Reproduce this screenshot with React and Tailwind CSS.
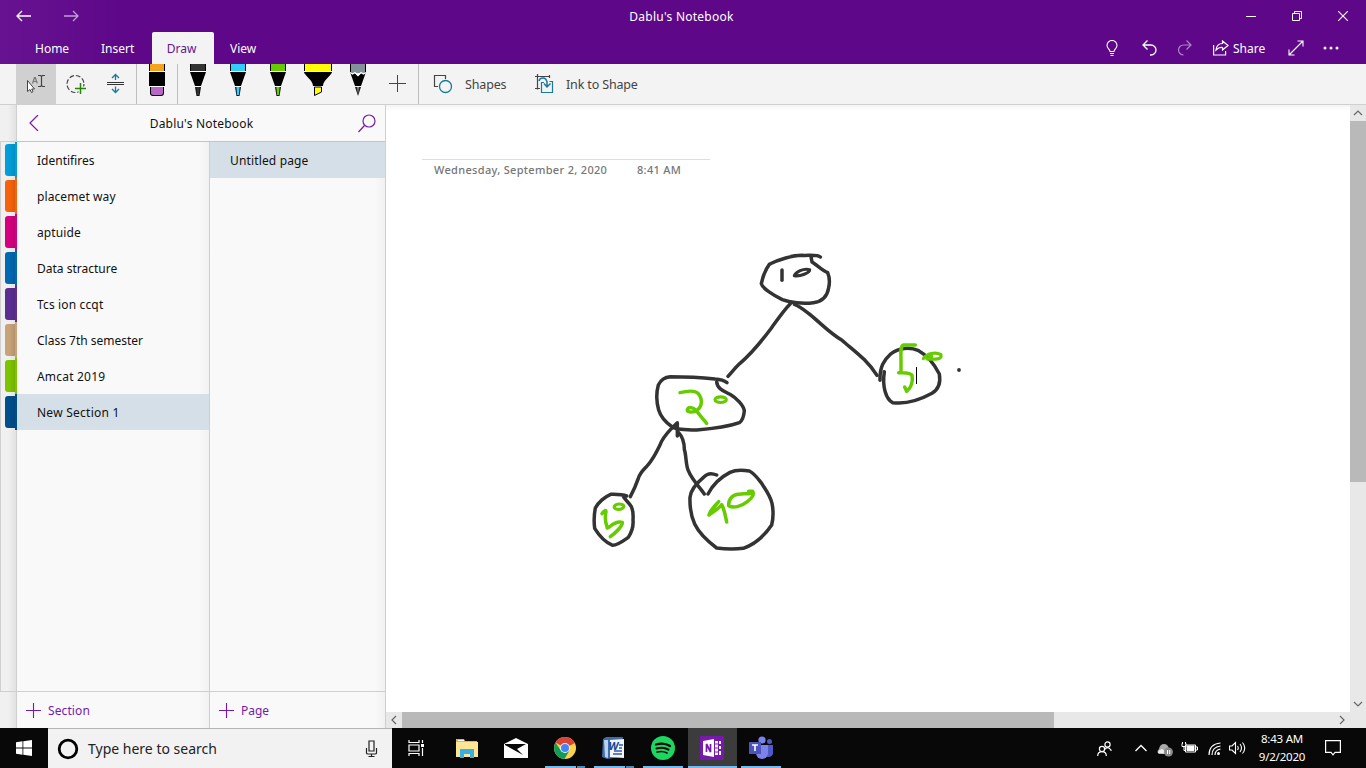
import React from "react";

const sections = [
  { name: "Identifires", color: "bg-[#009fda]" },
  { name: "placemet way", color: "bg-[#f7630c]", track: "tracking-[0.1px]" },
  { name: "aptuide", color: "bg-[#d4007f]", track: "tracking-[0.1px]" },
  { name: "Data stracture", color: "bg-[#0069b1]" },
  { name: "Tcs ion ccqt", color: "bg-[#5c2e91]", track: "tracking-[0.15px]" },
  { name: "Class 7th semester", color: "bg-[#c8a379]" },
  { name: "Amcat 2019", color: "bg-[#7dc400]", track: "tracking-[0.2px]" },
  { name: "New Section 1", color: "bg-[#004e8c]", active: true, track: "tracking-[0.25px]" },
];

const Icon = ({ w, h, sw = 1, className = "", children }) => (
  <svg width={w} height={h} viewBox={`0 0 ${w} ${h}`} fill="none" stroke="currentColor" strokeWidth={sw} className={`block shrink-0 ${className}`}>
    {children}
  </svg>
);

function TitleBar() {
  return (
    <header className="flex h-16 flex-col bg-[linear-gradient(90deg,#671391_0,#5e0889_120px)] text-white">
      <div className="flex h-8 items-center">
        <div className="flex w-[200px] items-center gap-8 pl-4">
          <Icon w={16} h={12} sw={1.3}><path d="M15 6H1M6 1L1 6l5 5" /></Icon>
          <Icon w={16} h={12} sw={1.3} className="opacity-60"><path d="M0 6h14M9 1l5 5-5 5" /></Icon>
        </div>
        <div className="flex-1 pr-[65px] pt-0.5 text-center text-[12px] tracking-[0.25px]">Dablu's Notebook</div>
        <div className="flex w-[138px]">
          <div className="flex h-8 w-[46px] items-center justify-center"><Icon w={10} h={10}><path d="M0 5.5h10" /></Icon></div>
          <div className="flex h-8 w-[46px] items-center justify-center"><Icon w={10} h={10}><path d="M.5 2.5h7v7h-7zM2.500 2.500v-2h7v7h-2" /></Icon></div>
          <div className="flex h-8 w-[46px] items-center justify-center"><Icon w={10} h={10} sw={1.1}><path d="M0 0l10 10M10 0L0 10" /></Icon></div>
        </div>
      </div>
      <nav className="flex h-8 items-center text-[12px]">
        <div className="w-[67px] pl-[35px] pt-0.5">Home</div>
        <div className="w-[85px] pl-[34px] pt-0.5">Insert</div>
        <div className="flex h-8 w-[62px] items-center justify-center rounded-t-[2px] bg-[#f3f3f3] pr-[3px] pt-0.5 text-[#671391]">Draw</div>
        <div className="flex-1 pl-4 pt-0.5">View</div>
        <div className="flex h-8 w-[260px] items-center">
          <Icon w={12} h={17} sw={1.1}><path d="M4 11.500C4 9 1 8.500 1 5.500a5 5 0 0 1 10 0C11 8.500 8 9 8 11.500zM4 13.500h4M4.500 15.500h3" /></Icon>
          <Icon w={15} h={16} sw={1.3} className="ml-6"><path d="M5.500.500L1 5l4.500 4.500M1 5h8a5 5 0 0 1 0 10H8" /></Icon>
          <Icon w={15} h={16} sw={1.2} className="ml-5 opacity-50"><path d="M9.500.500L14 5 9.500 9.500M14 5H6.500a5 5 0 0 0 0 10" /></Icon>
          <Icon w={16} h={16} sw={1.2} className="ml-[21px]"><path d="M.600 5v10h12v-4M9.500 1L15 5.500 9.500 10V7.500C6.500 7 5 8 3 10c.5-4 3-6.500 6.500-6.500z" /></Icon>
          <span className="ml-1 w-9 pt-0.5">Share</span>
          <Icon w={16} h={16} sw={1.1} className="ml-[19px]"><path d="M1 15L15 1M9.500 1H15v5.500M1 9.500V15h5.500" /></Icon>
          <svg width="16" height="4" viewBox="0 0 16 4" fill="currentColor" className="ml-[19px]"><circle cx="2" cy="2" r="1.500" /><circle cx="8" cy="2" r="1.500" /><circle cx="14" cy="2" r="1.500" /></svg>
        </div>
      </nav>
    </header>
  );
}

const Tool = ({ children, className = "" }) => (
  <div className={`flex h-10 w-10 shrink-0 items-start justify-center ${className}`}>{children}</div>
);

const Pen = ({ color }) => (
  <svg width="16" height="34" viewBox="0 0 16 34">
    <path d="M0 0h16v7H0z" fill="#000" /><path d="M1 0h14v7H1z" fill={color} />
    <path d="M0 7h16v1H0z" fill="#fff" />
    <path d="M0 8h16l-5 14H5z" fill="#000" />
    <path d="M5 22h6v1H5z" fill="#fff" />
    <path d="M5 23h6L9.500 32h-3z" fill="#111" /><path d="M6.300 23h3.400l-.8 8H7.100z" fill={color} />
  </svg>
);

function Toolbar() {
  return (
    <div className="flex h-[41px] border-b border-[#cfcfcf] bg-[#f3f3f3] pl-4 text-[#444]">
      <Tool className="bg-[#d0d0d0]">
        <svg width="40" height="40" viewBox="0 0 40 40" fill="none" stroke="#444">
          <path d="M22 11.500h2.500l1 1 1-1H29M25.500 12v10M22 22.500h2.500l1-1 1 1H29" strokeWidth="1.200" />
          <path d="M16.500 19.500l2-6h.8l2 6M17.500 17.500h3.500" stroke="#777" strokeWidth="1.200" />
          <path d="M11.500 16.500v11l2.500-2 1.500 3 1.500-.8-1.300-2.700h2.800z" fill="white" />
        </svg>
      </Tool>
      <Tool>
        <svg width="40" height="40" viewBox="0 0 40 40" fill="none">
          <circle cx="19.500" cy="20" r="8.500" stroke="#444" strokeWidth="1.200" strokeDasharray="4.700 2" />
          <path d="M19 24.500h11M24.500 19v11" stroke="#f3f3f3" strokeWidth="4" />
          <path d="M19 24.500h11M24.500 19v11" stroke="#268608" strokeWidth="1.500" />
        </svg>
      </Tool>
      <Tool>
        <svg width="40" height="40" viewBox="0 0 40 40" fill="none" stroke="#197a9b" strokeWidth="1.300">
          <path d="M19.500 10.500V16M16 14l3.500-3.500L23 14M19.500 22.500V28M16 25l3.500 3.500L23 25" />
          <path d="M11 18.500h17M11 20.500h17" stroke="#333" strokeWidth="1" />
        </svg>
      </Tool>
      <Tool className="w-[42px] border-x border-[#bdbdbd]">
        <svg width="16" height="34" viewBox="0 0 16 34">
          <path d="M0 7h16v1H0zM0 22h16v1H0z" fill="#fff" />
          <path d="M0 0h16v7H0z" /><path d="M1 0h14v7H1z" fill="#f5a31d" /><path d="M0 8h16v14H0z" />
          <path d="M1 23h14v6a3 3 0 0 1-3 3H4a3 3 0 0 1-3-3z" /><path d="M2 23h12v6a2 2 0 0 1-2 2H4a2 2 0 0 1-2-2z" fill="#ba66c8" />
        </svg>
      </Tool>
      <Tool><Pen color="#333" /></Tool>
      <Tool><Pen color="#33ccff" /></Tool>
      <Tool><Pen color="#66cc00" /></Tool>
      <Tool>
        <svg width="28" height="34" viewBox="0 0 28 34">
          <path d="M0 7h28v1H0zM9 22h10v1H9z" fill="#fff" />
          <path d="M0 0h28v7H0z" /><path d="M1 0h26v7H1z" fill="#ff0" />
          <path d="M0 8h28c0 3-9 8-9 14H9C9 16 0 11 0 8z" /><path d="M10.500 23h7v5l-7 3.500z" fill="#ff0" stroke="#000" />
        </svg>
      </Tool>
      <Tool>
        <svg width="16" height="34" viewBox="0 0 16 34">
          <path d="M0 0h16v9H0z" /><path d="M1 0h14v9H1z" fill="#84939a" />
          <path d="M0 8l2.500 2L5 9l3 3 3-3 2.500 1L16 8l-5 14H5z" /><path d="M0 8.500l2.500 1.500L5 8.500l3 3 3-3 2.500 1.500L16 8.500" fill="none" stroke="#fff" strokeWidth="1.300" />
          <path d="M5 23h6L8 32z" fill="#222" /><path d="M7 23h2l-1 7z" fill="#84939a" />
        </svg>
      </Tool>
      <Tool><svg width="40" height="40" viewBox="0 0 40 40" stroke="#444" strokeWidth="1"><path d="M11 19.500h17M19.500 11v17" /></svg></Tool>
      <div className="flex h-10 items-center border-l border-[#bdbdbd] pl-3.5 text-[12.5px] tracking-[-0.15px]">
        <svg width="20" height="20" viewBox="0 0 20 20" fill="none"><path d="M5 12.500H1.500v-11h11V5" stroke="#444" strokeWidth="1.200" /><circle cx="12.500" cy="12.500" r="6" stroke="#197a9b" strokeWidth="1.300" /></svg>
        <span className="ml-3 w-[70px] pt-0.5">Shapes</span>
        <svg width="20" height="20" viewBox="0 0 20 20" fill="none"><path d="M0 2.500h15M2.500 0v15.500M14.500 1v3M0 14.500h5" stroke="#444" strokeWidth="1.200" /><path d="M9 8.500H6.500v10h11v-11h-3" stroke="#197a9b" strokeWidth="1.200" /><path d="M4 7c1-4 7-4.500 8 1v5M9 9.500l3 3.500 3.500-3.500" stroke="#197a9b" strokeWidth="1.500" /></svg>
        <span className="ml-[11px] pt-0.5">Ink to Shape</span>
      </div>
    </div>
  );
}

const Plus = () => <Icon w={15} h={15} sw={1.1}><path d="M0 7.500h15M7.500 0v15" /></Icon>;

function Sidebar() {
  return (
    <aside className="flex w-[386px] shrink-0 text-[12px] text-[#111]">
      <div className="z-10 flex w-4 shrink-0 flex-col bg-[linear-gradient(90deg,#f0f0f0_50%,#e2e2e2)]">
        <div className="h-9" />
        <div className="h-[551px] border-y border-l border-[#cfcfcf]">
          {sections.map((s) => (
            <div key={s.name} className="flex h-9 w-4 items-center pl-1">
              <div className={`h-8 w-2.5 shrink-0 rounded-l-[3px] bg-[linear-gradient(90deg,transparent_40%,rgba(0,0,0,0.1))] ${s.color}`} />
              <div className={`h-9 w-0.5 shrink-0 ${s.color}`} />
            </div>
          ))}
        </div>
      </div>
      <div className="flex flex-1 flex-col border-r border-[#cfcfcf] border-l bg-[#f9f9f9]">
        <div className="flex h-[37px] items-center border-b border-[#c4c4c4] px-3 text-[#7719aa]">
          <Icon w={10} h={16} sw={1.2}><path d="M9 0L1 8l8 8" /></Icon>
          <span className="flex-1 pl-1.5 pt-0.5 text-center tracking-[0.2px] text-[#111]">Dablu's Notebook</span>
          <Icon w={18} h={19} sw={1.2} className="-mr-[3px]"><circle cx="11" cy="7" r="6" /><path d="M6.500 11.500L.500 18" /></Icon>
        </div>
        <div className="flex flex-1">
          <div className="flex w-[193px] flex-col border-r border-[#cfcfcf] bg-[linear-gradient(90deg,transparent_182px,#f1f1f1)]">
            <div className="flex-1">
              {sections.map((s) => (
                <div key={s.name} className={`flex h-9 items-center pl-5 pt-0.5 ${s.track || ""} ${s.active ? "bg-[#d5dfe7]" : ""}`}>{s.name}</div>
              ))}
            </div>
            <div className="flex h-[37px] items-center gap-[7px] border-t border-[#cfcfcf] pl-[9px] text-[#7719aa]"><Plus /><span className="pt-0.5 tracking-[0.1px]">Section</span></div>
          </div>
          <div className="flex flex-1 flex-col bg-[linear-gradient(90deg,transparent_165px,#f1f1f1)]">
            <div className="flex-1"><div className="flex h-9 items-center bg-[#d5dfe7] pl-5 pt-0.5 tracking-[0.15px]">Untitled page</div></div>
            <div className="flex h-[37px] items-center gap-[7px] border-t border-[#cfcfcf] pl-[9px] text-[#7719aa]"><Plus /><span className="pt-0.5">Page</span></div>
          </div>
        </div>
      </div>
    </aside>
  );
}

function Ink() {
  return (
    <svg width="964" height="607" viewBox="386 105 964 607" className="absolute left-0 top-0" fill="none" strokeLinecap="round" strokeLinejoin="round">
      <g transform="translate(580 360) scale(.33333)" stroke="#333" strokeWidth="10.500">
        <path d="M441 68C432 61 420 58 405 57C360 52 310 50 271 50C255 51 242 60 235 75C228 100 229 125 236 150C242 170 258 188 277 201C290 209 315 210 350 210C400 206 450 198 478 188C488 182 492 165 493 152C490 135 470 115 450 103C432 93 412 87 410 66" />
        <path d="M292 228V188L274 206C255 226 245 240 240 255C228 280 215 303 202 317C190 330 180 338 175 355C168 375 160 393 151 410" />
        <path d="M296 218C307 230 313 245 313 268C319 285 317 315 325 332C336 360 360 382 373 402" />
        <path d="M140 408C125 402 105 403 92 403C75 410 55 427 46 444C42 465 42 490 44 505C55 523 75 547 98 556C112 556 128 544 145 532C154 518 161 500 159 480C160 465 159 450 154 440C145 425 135 420 129 408" />
        <path d="M410 345C396 339 382 340 373 350C355 365 332 387 330 412C329 440 334 470 344 492C355 515 385 545 410 564C440 568 465 568 490 565C525 553 555 525 575 495C580 475 580 450 576 430C570 405 555 387 545 370C533 355 523 340 508 333C490 330 465 330 450 337C425 350 400 370 384 402" />
      </g>
      <g transform="translate(580 360) scale(.33333)" stroke="#66cc00" strokeWidth="10.500">
        <path d="M300 98C320 93 345 90 355 101C371 121 365 145 345 154C334 158 321 156 322 149C326 139 340 142 348 151C358 165 370 177 380 190" />
        <ellipse cx="422" cy="119" rx="17" ry="8.500" strokeWidth="9.500" />
        <path d="M66 461C76 449 80 448 77 462C73 480 79 492 82 504L88 501C101 490 115 484 127 487C128 497 108 518 91 530" />
        <ellipse cx="117" cy="440" rx="14.500" ry="8" strokeWidth="9.500" transform="rotate(-6 117 440)" />
        <path d="M387 465C395 450 405 438 416 425C400 440 390 455 387 465C404 453 417 445 425 434C434 450 437 470 440 486" />
        <path d="M474 403C455 405 445 420 446 437C460 446 483 440 502 425C516 414 524 402 518 394H506M474 403C487 400 500 403 513 400" />
      </g>
      <g transform="translate(740 240) scale(.33333)" stroke="#333" strokeWidth="10.500">
        <path d="M241 51C232 43 210 47 185 46C160 46 115 58 88 73C76 89 69 107 64 131C67 145 102 167 127 179C150 188 190 192 220 188C248 184 262 170 266 143C269 130 268 110 263 98C246 91 235 78 216 66L213 50" />
        <path d="M126 90V121" />
        <path d="M163 107C167 96 190 84 209 89C209 98 181 110 163 107Z" strokeWidth="9.500" />
        <path d="M151 191C130 212 107 246 92 267C65 303 35 340 0 370C-12 381-25 397-36 409" />
        <path d="M163 193C178 198 190 208 208 222C245 252 270 280 305 300C345 335 382 360 411 406" />
        <path d="M420 421C419 380 432 360 452 342C475 322 512 321 536 332C560 345 582 370 598 402C602 425 597 447 576 460C545 477 500 494 458 488C438 478 426 440 433 395" />
      </g>
      <g transform="translate(740 240) scale(.33333)" stroke="#66cc00" strokeWidth="10.500">
        <path d="M526 315H490C480 320 483 340 483 365V398H476C495 399 510 397 516 406C520 425 513 444 500 454L494 441" />
        <path d="M550 356C560 340 587 335 603 344C607 360 582 358 561 357C567 355 571 352 575 349" strokeWidth="9.500" />
      </g>
      <circle cx="959" cy="370" r="1.900" fill="#333" />
      <path d="M916.500 367v17" stroke="#000" strokeLinecap="butt" />
    </svg>
  );
}

const Arrow = ({ d }) => <svg width="16" height="16" viewBox="0 0 16 16" fill="none" stroke="#666" strokeWidth="1.200" className="shrink-0"><path d={d} /></svg>;

function Canvas() {
  return (
    <main className="flex flex-1 flex-col bg-white">
      <div className="flex h-[607px]">
        <section className="relative flex-1 bg-[linear-gradient(180deg,#f4f4f4_0,#fff_6px)] pl-9 pt-[54px]">
          <div className="flex h-[22px] w-[288px] items-center border-t border-[#dedede] pl-3 text-[11px] font-medium tracking-[0.32px] text-[#767676]">
            <span className="w-[203px]">Wednesday, September 2, 2020</span><span>8:41 AM</span>
          </div>
          <Ink />
        </section>
        <div className="flex w-4 flex-col bg-[#e8e8e8]">
          <Arrow d="M4 10l4-4 4 4" /><div className="h-[361px] bg-[#b9b9b9]" /><div className="flex-1" /><Arrow d="M4 6l4 4 4-4" />
        </div>
      </div>
      <div className="flex h-4 bg-[#e8e8e8]">
        <Arrow d="M10 4L6 8l4 4" /><div className="w-[652px] bg-[#b9b9b9]" /><div className="flex-1" /><Arrow d="M6 4l4 4-4 4" /><div className="w-4" />
      </div>
    </main>
  );
}

const App49 = ({ children, bar, active }) => (
  <div className={`flex h-10 w-[49px] flex-col items-center ${active ? "bg-[#3c3c3c]" : "pr-0.5"}`}>
    <div className={`flex h-[38px] items-center pt-0.5 ${active ? "pr-px" : ""}`}>{children}</div>
    {bar && <div className={`flex h-0.5 bg-[#76b9ed] ${active ? "w-[49px]" : "w-10"}`}>{bar === 2 && <div className="ml-auto w-[9px] border-l border-black bg-[#5486ad]" />}</div>}
  </div>
);

function Taskbar() {
  return (
    <footer className="flex h-10 bg-[#080808] text-white">
      <div className="flex w-12 items-center justify-center"><svg width="16" height="16" viewBox="0 0 16 16" fill="#fff"><path d="M0 2.200L6.500 1.300V7.500H0zM7.300 1.200L16 0v7.500H7.300zM0 8.400h6.500v6.300L0 13.800zM7.300 8.400H16V16l-8.700-1.200z" /></svg></div>
      <div className="flex w-[344px] items-center border-t border-[#b5b5b5] bg-[#f2f2f2] pl-[9px] pr-3 text-[#222]">
        <svg width="22" height="22" viewBox="0 0 22 22" fill="none" stroke="#000" strokeWidth="2.800"><circle cx="11" cy="11" r="8.800" /></svg>
        <span className="ml-[9px] flex-1 text-[14px]">Type here to search</span>
        <Icon w={17} h={18} sw={1.200}><path d="M6 1h5v10H6zM3.500 8v5q0 1 1.500 1h7q1.500 0 1.500-1V8M8.500 14v3M5.500 16.500h6" /></Icon>
      </div>
      <div className="flex w-[51px] items-center pl-4"><Icon w={18} h={16} sw={1.200}><path d="M1 0v2.500h10V0M1 16v-2.500h10V16M1 5h10v6H1zM14.500 0v3M14.500 8v8" /><path d="M13 5.500h3" strokeWidth="3" /></Icon></div>
      <App49>
        <svg width="22" height="20" viewBox="0 0 22 20"><path d="M0 1h8l1 2h12v16H0z" fill="#e9b43a" /><path d="M0 4h22v15H0z" fill="#ffe594" /><path d="M2 2h6v1H2z" fill="#fff" /><path d="M4 20v-9h14v9h-4v-4H8v4z" fill="#38aee5" /></svg>
      </App49>
      <App49>
        <svg width="24" height="20" viewBox="0 0 24 20"><path d="M0 6l12-6 12 6v14H0z" fill="#fff" /><path d="M1 6h21l-9 5 6 6L1 7z" fill="#080808" /></svg>
      </App49>
      <App49 bar={2}>
        <svg width="22" height="22" viewBox="0 0 22 22"><circle cx="11" cy="11" r="11" fill="#ffd24d" /><path d="M11 11L1.500 5.500A11 11 0 0 1 20.500 5.500L20.600 6.200z" fill="#db4437" /><path d="M1.500 5.500A11 11 0 0 0 10.500 22L15.500 13.500 6.500 13z" fill="#0f9d58" /><circle cx="11" cy="11" r="5" fill="#f1f1f1" /><circle cx="11" cy="11" r="4" fill="#4285f4" /></svg>
      </App49>
      <App49 bar={2}>
        <svg width="23" height="23" viewBox="0 0 23 23"><path d="M1 2L4 0h17l-3 20-13 2-5-2z" fill="#406cae" /><path d="M2 3l1 17 3 1V3z" fill="#bad1ef" /><path d="M8 3l14-1v19l-14-1z" fill="#f4f6fc" /><path d="M12 14h8M11 17h9M17 8h4M17 11h3" stroke="#2e5caa" strokeWidth="1.500" /><text x="6.500" y="13" fontSize="11" fontWeight="700" fontStyle="italic" fill="#194896">W</text></svg>
      </App49>
      <App49 bar={1}>
        <svg width="24" height="24" viewBox="0 0 24 24" fill="none" stroke="#080808" strokeLinecap="round"><circle cx="12" cy="12" r="12" fill="#1ed760" stroke="none" /><path d="M5 8.500q8-2.500 14 1.500" strokeWidth="2.300" /><path d="M5.500 12.500q7-2 12 1.200" strokeWidth="2" /><path d="M6 16q6-1.500 10 1" strokeWidth="1.600" /></svg>
      </App49>
      <App49 bar={1} active>
        <svg width="24" height="24" viewBox="0 0 24 24"><path d="M0 0h24v24H0z" fill="#7719aa" /><path d="M3 5l11-2v18L3 19zM15 5h3v14h-3zM19 5h2v3h-2zM19 10h2v3h-2zM19 15h2v4h-2z" fill="#fff" /><path d="M6.500 16V8l4 8V8" fill="none" stroke="#7719aa" strokeWidth="1.700" /><path d="M15 8h3M15 12h3M15 16h3" stroke="#7719aa" /></svg>
      </App49>
      <App49 bar={1}>
        <svg width="24" height="24" viewBox="0 0 24 24"><circle cx="20.500" cy="5.500" r="2.500" fill="#5059c9" /><path d="M17 9h7v8q0 3-4 4h-3z" fill="#5059c9" /><circle cx="13" cy="4" r="3.600" fill="#7b83eb" /><path d="M7 9h12v8a6 6 0 0 1-12 0z" fill="#7b83eb" /><path d="M0 6h12v12H0z" fill="#4b53bc" /><path d="M3 9h6M6 9v6" stroke="#fff" strokeWidth="1.600" /></svg>
      </App49>
      <div className="ml-auto flex items-center pr-[25px]">
        <Icon w={15} h={15} sw={1.200} className="mr-[23px]"><circle cx="10.500" cy="3.500" r="2.600" /><path d="M7.500 8.500q3-4 6.500.5V10" /><circle cx="5" cy="8" r="2.600" /><path d="M.700 15q0-4.300 4.300-4.300T9.300 15" /></Icon>
        <Icon w={12} h={8} sw={1.300} className="mr-2.5"><path d="M.500 7L6 1.500 11.500 7" /></Icon>
        <svg width="16" height="14" viewBox="0 0 16 14" className="mr-2 mt-1"><path d="M2 11q-3-2 0-5 1-5 5-5 4 0 5 5v5z" fill="#aaa" /><path d="M1 10q0-3 4-4l7 5z" fill="#eee" /><circle cx="11.500" cy="9" r="4.500" fill="#888" /><path d="M10.500 7v4M12.700 7v4" stroke="#fff" /></svg>
        <svg width="17" height="12" viewBox="0 0 17 12" fill="none" stroke="#fff" className="mr-[10px]"><path d="M4.500 4.500V3h10v7H4.500zM15 5h1.500v3H15M1 1.500v3h4v-3M3 4.500v4h2M1.500 0v2M4.500 0v2" /><path d="M6 4h7v4.500H6z" fill="#fff" /></svg>
        <Icon w={13} h={13} sw={1.200} className="mr-2"><path d="M1 13Q1 2 12.500 1M4 13q0-8 8.500-9M7 13q0-5 5.500-6" /><circle cx="10.500" cy="11.500" r="1.500" fill="#fff" stroke="none" /></Icon>
        <Icon w={17} h={14} sw={1.100} className="mr-[11px]"><path d="M.500 5h2.500l3.500-3.500v11L3 9H.500zM8.500 5q1.500 2 0 4M11 3q3 4 0 8M13.500 1.500q4.500 5.500 0 11" /></Icon>
        <div className="w-[50px] whitespace-nowrap text-center text-[11.500px] leading-[18px] tracking-[-0.2px]"><div>8:43 AM</div><div>9/2/2020</div></div>
        <Icon w={16} h={16} sw={1.200} className="ml-[18px]"><path d="M.600.600h14.800v11.800H10L8 14.800 6 12.400H.600z" /></Icon>
      </div>
    </footer>
  );
}

export default function App() {
  return (
    <div className="flex h-[768px] w-[1366px] flex-col overflow-hidden bg-white font-['Noto_Sans','Open_Sans',sans-serif]">
      <TitleBar />
      <Toolbar />
      <div className="flex h-[623px]"><Sidebar /><Canvas /></div>
      <Taskbar />
    </div>
  );
}
